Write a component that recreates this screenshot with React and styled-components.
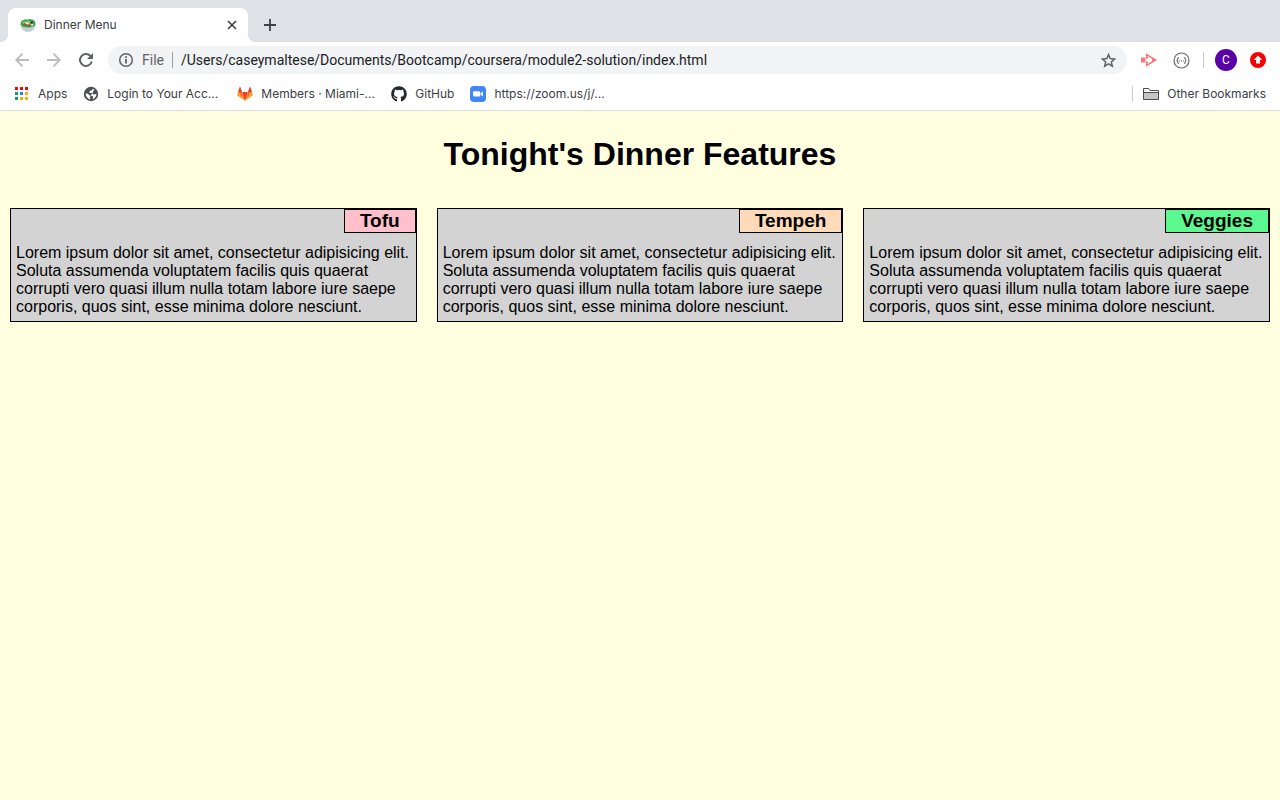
import React from "react";
import styled, { createGlobalStyle } from "styled-components";
import { FaGithub } from "react-icons/fa";

const Global = createGlobalStyle`
  *, *::before, *::after { box-sizing: border-box; }
  html { background: #ffffe0; }
  body { margin: 0; background: #ffffe0; }
`;

const Browser = styled.div`
  min-height: 100vh;
  display: flex;
  flex-direction: column;
`;

const Chrome = styled.header`
  font-family: Inter, Roboto, "Liberation Sans", sans-serif;
  font-size: 12px;
  line-height: 14px;
  color: #3c4043;
  background: #fff;
  border-bottom: 1px solid #dadce0;
`;

const TabStrip = styled.div`
  display: flex;
  align-items: flex-end;
  height: 42px;
  padding: 0 8px;
  background: #dee1e6;
`;

const Tab = styled.div`
  position: relative;
  display: flex;
  align-items: center;
  gap: 8px;
  width: 240px;
  height: 34px;
  padding: 0 8px 0 12px;
  background: #fff;
  border-radius: 8px 8px 0 0;

  &::before,
  &::after {
    content: "";
    position: absolute;
    bottom: 0;
    width: 8px;
    height: 8px;
  }
  &::before {
    right: 100%;
    background: radial-gradient(circle at 0 0, #dee1e6 8px, #fff 8px);
  }
  &::after {
    left: 100%;
    background: radial-gradient(circle at 100% 0, #dee1e6 8px, #fff 8px);
  }
`;

const TabTitle = styled.span`
  flex: 1;
`;

const IconButton = styled.button`
  display: flex;
  align-items: center;
  justify-content: center;
  flex: none;
  width: ${(p) => p.$size}px;
  height: ${(p) => p.$size}px;
  padding: 0;
  border: 0;
  background: none;
  color: ${(p) => p.$color || "#5f6368"};
`;

const NewTab = styled(IconButton)`
  align-self: center;
  margin: 8px 0 0 8px;
`;

const Toolbar = styled.div`
  display: flex;
  align-items: center;
  height: 36px;
  padding: 0 11px 0 8px;
  gap: 4px;
`;

const AddressBar = styled.label`
  flex: 1;
  display: flex;
  align-items: center;
  gap: 8px;
  height: 28px;
  margin: 0 4px;
  padding: 0 10px;
  border-radius: 14px;
  background: #f1f3f4;
  color: #5f6368;
  font-family: Roboto, "Liberation Sans", sans-serif;
  font-size: 14px;
`;

const Scheme = styled.span`
  padding-right: 8px;
  border-right: 1px solid #9aa0a6;
  line-height: 16px;
`;

const Address = styled.input`
  flex: 1;
  min-width: 0;
  padding: 0;
  border: 0;
  outline: 0;
  background: none;
  font: inherit;
  line-height: 16px;
  color: #202124;
`;

const Divider = styled.span`
  width: 1px;
  height: 16px;
  margin: 0 7px 0 4px;
  background: #c8cbcf;
`;

const Avatar = styled.button`
  width: 22px;
  height: 22px;
  margin-right: 6px;
  padding: 0;
  border: 0;
  border-radius: 50%;
  background: #5a00a8;
  color: #fff;
  font: 12px Roboto, "Liberation Sans", sans-serif;
`;

const Bookmarks = styled.nav`
  display: flex;
  align-items: center;
  gap: 16px;
  height: 32px;
  padding: 0 14px;
`;

const Bookmark = styled.a`
  display: flex;
  align-items: center;
  gap: 8px;
  min-width: ${(p) => (p.$elided ? "138px" : "0")};
  color: inherit;
  text-decoration: none;
  white-space: nowrap;
`;

const OtherBookmarks = styled.div`
  display: flex;
  align-items: center;
  height: 16px;
  margin-left: auto;
  padding-left: 10px;
  border-left: 1px solid #c8cbcf;
`;

const Page = styled.main`
  flex: 1;
  padding: 24px 10px;
  font-family: "Liberation Sans", Arial, sans-serif;
  font-size: 16px;
  line-height: 18px;
  color: #000;
`;

const Title = styled.h1`
  margin: 0 0 34px;
  font-size: 32px;
  line-height: 39px;
  text-align: center;
`;

const Menu = styled.div`
  display: grid;
  grid-template-columns: repeat(3, 1fr);
  gap: 20px;
`;

const Card = styled.section`
  display: flex;
  flex-direction: column;
  border: 1px solid #000;
  background: #d3d3d3;
`;

const CardLabel = styled.h2`
  align-self: flex-end;
  margin: 0;
  padding: 0 15px;
  border: 1px solid #000;
  background: ${(p) => p.$color};
  font-size: 19px;
  line-height: 22px;
`;

const CardText = styled.p`
  margin: 0;
  padding: 11px 5px 5px;
`;

const Stroked = ({ size, width = 2, children }) => (
  <svg
    width={size}
    height={size}
    viewBox={`0 0 ${size} ${size}`}
    fill="none"
    stroke="currentColor"
    strokeWidth={width}
    aria-hidden="true"
  >
    {children}
  </svg>
);

const CloseIcon = () => (
  <Stroked size={10} width={1.6}><path d="M1 1l8 8M9 1L1 9" /></Stroked>
);
const PlusIcon = () => (
  <Stroked size={12} width={1.8}><path d="M6 0v12M0 6h12" /></Stroked>
);
const BackIcon = () => (
  <Stroked size={16} width={1.8}><path d="M15 8H2.500M8.500 1.700L2.200 8l6.300 6.300" /></Stroked>
);
const ForwardIcon = () => (
  <Stroked size={16} width={1.8}><path d="M1 8h12.500M7.500 1.700L13.800 8l-6.300 6.300" /></Stroked>
);
const ReloadIcon = () => (
  <Stroked size={16}>
    <path d="M13.800 9.500A6 6 0 1 1 12.500 4" />
    <path d="M15 1v6H9z" fill="currentColor" stroke="none" />
  </Stroked>
);
const InfoIcon = () => (
  <Stroked size={16} width={1.5}>
    <circle cx="8" cy="8" r="6.300" />
    <path d="M8 7v4.500M8 4.300v1.700" strokeWidth="1.800" />
  </Stroked>
);
const StarIcon = () => (
  <Stroked size={17} width={1.5}>
    <path d="M8.500 2.600l1.700 4 4.400.4-3.300 2.900 1 4.300-3.800-2.300-3.800 2.300 1-4.300L2.400 7l4.400-.4z" />
  </Stroked>
);

const Salad = () => (
  <svg width="16" height="16" viewBox="0 0 16 16" aria-hidden="true">
    <path d="M.8 8h14.400c0 3.500-2.200 5.500-4.400 6.500-1.500.6-4.100.6-5.600 0C3 13.500.8 11.500.8 8z" fill="#c3cfd8" />
    <path d="M.5 7.500C.3 5 2 3 4 3c1-1 2.500-1 3.500-.3C9 1.800 10.500 2 11.500 2.600c2.500 0 4.300 2.400 4 4.900-1 2.300-4 3-7.500 3S1.500 9.800.5 7.500z" fill="#35a04b" />
    <path d="M2 5.500l2-1.500 2 .8L8 3.500l3 .8 2.500.4-.5 2-3 1.300-4-1-3 .5z" fill="#7ccb5c" />
    <path d="M2.500 7.200L4.600 6l1.800 1.600-1.800 1.300z" fill="#d93a35" />
    <path d="M5.500 4.800l3.500 1.400-1 1.300-2.500-1.200z" fill="#f5ece0" />
    <path d="M7.500 7.500l2.700.2.300 1.500-2.300.3z" fill="#d6332f" />
    <circle cx="11.700" cy="5.500" r="1.400" fill="#5a3350" />
    <path d="M11 7.500l2.500-.7-.5 1.800-1.700.4z" fill="#f1f5ea" />
  </svg>
);

const AppsIcon = () => {
  const colors = ["#f00", "#f00", "#f00", "#0f9d58", "#1a84ff", "#ffab00", "#0f9d58", "#ffab00", "#ffab00"];
  return (
    <svg width="16" height="16" viewBox="0 0 16 16" aria-hidden="true">
      {colors.map((c, i) => (
        <rect key={i} x={1 + (i % 3) * 5} y={1 + Math.floor(i / 3) * 5} width="3" height="3" fill={c} />
      ))}
    </svg>
  );
};

const Globe = () => (
  <svg width="16" height="16" viewBox="0 0 16 16" aria-hidden="true">
    <circle cx="8" cy="8" r="7.200" fill="#4d5156" />
    <path
      d="M11.500 3.300C9.500 3 8.700 3.500 8.500 4.500 8.300 5.300 6.300 4.800 6.300 6c0 1 1.200.9 2.200 1 1.300.2 1 1.500 2.300 1.600 1 .1 1.400-.6 2.700-.5-.1 2.600-1.700 4.600-4 5.200.1-1.300.9-1.300.7-2.300-.3-1.600-2-1.300-3.300-1.600C5.600 9 5.500 7.800 4 7.600L2.600 7.500c0 3 2 5.300 4.700 5.900.2-.8 0-1.400-.6-2"
      fill="#fff"
    />
  </svg>
);

const GitLab = () => (
  <svg width="16" height="16" viewBox="0 0 16 16" aria-hidden="true">
    <path d="M8 15L5.100 6h5.800z" fill="#e24329" />
    <path d="M8 15L5.100 6H1zM8 15l2.900-9H15z" fill="#fc6d26" />
    <path d="M1 6L.1 8.700c-.1.300 0 .6.200.7L8 15zM15 6l.9 2.700c.1.300 0 .6-.2.700L8 15z" fill="#fca326" />
    <path d="M1 6h4.100L3.300.9c-.1-.3-.5-.3-.6 0zM15 6h-4.100L12.700.9c.1-.3.500-.3.600 0z" fill="#e24329" />
  </svg>
);

const Zoom = () => (
  <svg width="16" height="16" viewBox="0 0 16 16" aria-hidden="true">
    <rect width="16" height="16" rx="4" fill="#3f87fb" />
    <path d="M3 5.200h5.800c.9 0 1.500.6 1.500 1.500v3.900H4.500c-.9 0-1.500-.6-1.500-1.500zM10.800 7.200L13 5.500v5l-2.200-1.700z" fill="#fff" />
  </svg>
);

const Folder = () => (
  <svg width="16" height="14" viewBox="0 0 16 14" aria-hidden="true">
    <path d="M.5 12.500v-11h5l1.500 2h8.500v9z" fill="#fff" stroke="#4d4d4d" />
    <path d="M1 5.500h14v6.500H1z" fill="#c4c4c4" />
    <path d="M.5 5.500h15" stroke="#4d4d4d" />
  </svg>
);

const Recorder = () => (
  <svg width="16" height="14" viewBox="0 0 16 14" aria-hidden="true">
    <path d="M0 4.500h4.500v5H0z" fill="#ff7474" />
    <path d="M5.700 4.500V1.500L14.500 7l-8.800 5.500v-3" fill="none" stroke="#ff7474" strokeWidth="1.500" />
    <path d="M5 4h2v1.500H5zM5 8.500h2V10H5zM11 4.600L15.500 7 11 9.400z" fill="#ff7474" />
  </svg>
);

const Braces = () => (
  <svg width="17" height="17" viewBox="0 0 17 17" aria-hidden="true" fill="none" stroke="#6b6b6b">
    <circle cx="8.500" cy="8.500" r="7.500" strokeWidth="1.200" />
    <path
      d="M6 5.500c-1.300 0-1.300.6-1.300 1.500s-.2 1.500-1.200 1.500c1 0 1.200.6 1.200 1.500s0 1.500 1.300 1.500M11 5.500c1.300 0 1.300.6 1.300 1.500s.2 1.500 1.200 1.500c-1 0-1.200.6-1.200 1.500s0 1.500-1.300 1.500"
      strokeWidth="1.200"
    />
    <path d="M6 9h1M8 9h1M10 9h1" />
  </svg>
);

const Update = () => (
  <svg width="16" height="16" viewBox="0 0 16 16" aria-hidden="true">
    <circle cx="8" cy="8" r="8" fill="#f60000" />
    <path d="M8 3.500l4.200 4.500H10v3.500H6V8H3.800z" fill="#fff" />
  </svg>
);

const bookmarks = [
  { label: "Apps", Icon: AppsIcon },
  { label: "Login to Your Acc...", Icon: Globe, elided: true },
  { label: "Members · Miami-...", Icon: GitLab, elided: true },
  { label: "GitHub", Icon: () => <FaGithub size={16} color="#24292e" /> },
  { label: "https://zoom.us/j/...", Icon: Zoom },
];

const dishes = [
  { name: "Tofu", color: "#ffc0cb" },
  { name: "Tempeh", color: "#ffdab9" },
  { name: "Veggies", color: "#5bf78f" },
];

export default function App() {
  return (
    <Browser>
      <Global />
      <Chrome>
        <TabStrip>
          <Tab>
            <Salad />
            <TabTitle>Dinner Menu</TabTitle>
            <IconButton $size={16} $color="#3c4043" aria-label="Close tab"><CloseIcon /></IconButton>
          </Tab>
          <NewTab $size={28} $color="#3c4043" aria-label="New tab"><PlusIcon /></NewTab>
        </TabStrip>
        <Toolbar>
          <IconButton $size={28} $color="#babcbe" aria-label="Back"><BackIcon /></IconButton>
          <IconButton $size={28} $color="#babcbe" aria-label="Forward"><ForwardIcon /></IconButton>
          <IconButton $size={28} aria-label="Reload"><ReloadIcon /></IconButton>
          <AddressBar>
            <InfoIcon />
            <Scheme>File</Scheme>
            <Address
              aria-label="Address"
              defaultValue="/Users/caseymaltese/Documents/Bootcamp/coursera/module2-solution/index.html"
            />
            <StarIcon />
          </AddressBar>
          <IconButton $size={28} aria-label="Screen recorder"><Recorder /></IconButton>
          <IconButton $size={28} aria-label="JSON viewer"><Braces /></IconButton>
          <Divider />
          <Avatar aria-label="Profile">C</Avatar>
          <IconButton $size={22} aria-label="Update browser"><Update /></IconButton>
        </Toolbar>
        <Bookmarks aria-label="Bookmarks">
          {bookmarks.map(({ label, Icon, elided }) => (
            <Bookmark key={label} href="#" $elided={elided}><Icon />{label}</Bookmark>
          ))}
          <OtherBookmarks>
            <Bookmark href="#"><Folder />Other Bookmarks</Bookmark>
          </OtherBookmarks>
        </Bookmarks>
      </Chrome>
      <Page>
        <Title>Tonight's Dinner Features</Title>
        <Menu>
          {dishes.map(({ name, color }) => (
            <Card key={name}>
              <CardLabel $color={color}>{name}</CardLabel>
              <CardText>
                Lorem ipsum dolor sit amet, consectetur adipisicing elit. Soluta assumenda voluptatem
                facilis quis quaerat corrupti vero quasi illum nulla totam labore iure saepe corporis,
                quos sint, esse minima dolore nesciunt.
              </CardText>
            </Card>
          ))}
        </Menu>
      </Page>
    </Browser>
  );
}
